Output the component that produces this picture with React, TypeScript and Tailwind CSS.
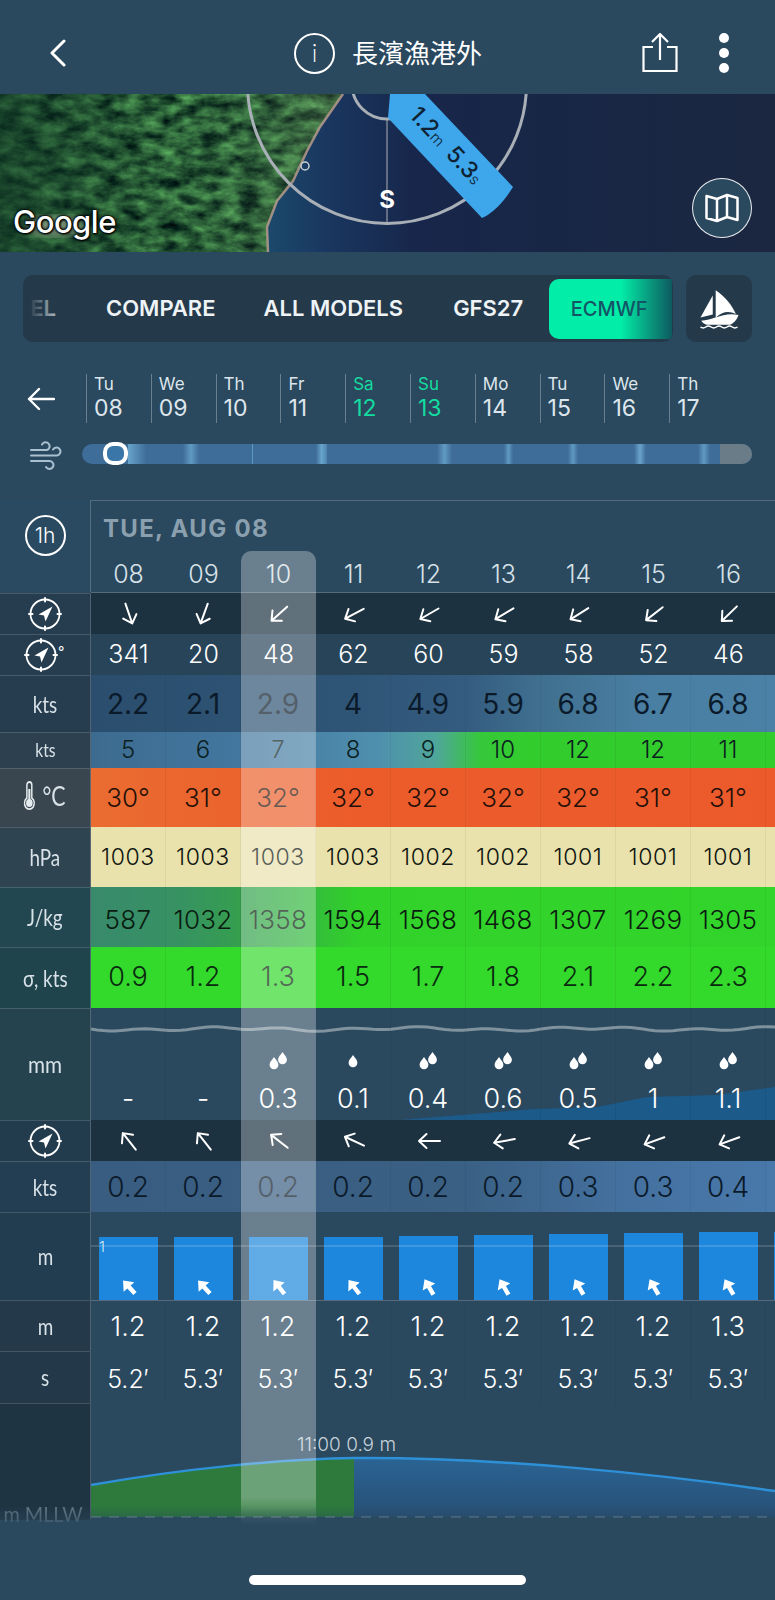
import React from "react";

const hours = ["08", "09", "10", "11", "12", "13", "14", "15", "16", ""];

function Compass() {
  return (
    <svg width="34" height="34" viewBox="0 0 34 34" className="block">
      <circle cx="17" cy="17" r="14.5" fill="none" stroke="#fff" strokeWidth="1.8" />
      <path d="M17 1v3.500M17 29.500V33M1 17h3.500M29.500 17H33" stroke="#fff" strokeWidth="2" strokeLinecap="round" />
      <path d="M24.500 9.500 10.500 17.500 16 18.500 17.500 24.500Z" fill="#fff" />
    </svg>
  );
}

function Arrow({ a }: { a: number }) {
  return (
    <svg width="26" height="26" viewBox="0 0 26 26" style={{ transform: `rotate(${a}deg)` }} className="block">
      <path d="M13 24V3M6 10.5 13 3l7 7.5" fill="none" stroke="#fff" strokeWidth="2" strokeLinecap="round" strokeLinejoin="round" />
    </svg>
  );
}

function FatArrow({ a }: { a: number }) {
  return (
    <svg width="20" height="20" viewBox="0 0 18 18" style={{ transform: `rotate(${a}deg)` }} className="block">
      <path d="M9 1 15.5 9H11v8H7V9H2.5Z" fill="#fff" />
    </svg>
  );
}

function Drops({ n }: { n: number }) {
  if (n === 0) return <div className="h-[22px]" />;
  const d = (x: number, y: number) => `M${x} ${y}c2.600 3.600 4.400 5.400 4.400 7.800a4.400 4.400 0 0 1-8.800 0c0-2.400 1.800-4.200 4.400-7.800Z`;
  return (
    <svg width="24" height="22" viewBox="0 0 24 22" className="block">
      {n === 1 ? (
        <path d={d(12, 4)} fill="#fff" />
      ) : (
        <>
          <path d={d(8, 6)} fill="#fff" />
          <path d={d(16.5, 1)} fill="#fff" />
        </>
      )}
    </svg>
  );
}

function Cell({ children }: { children?: React.ReactNode }) {
  return <div className="w-[75px] shrink-0 h-full flex items-center justify-center border-r border-black/5">{children}</div>;
}

function Label({ bg, children, small }: { bg: string; children: React.ReactNode; small?: boolean }) {
  return (
    <div className={`w-[91px] shrink-0 h-full flex items-center justify-center border-r border-t border-r-white/20 border-t-white/15 text-[#d8e2e8] [font-family:Lato,sans-serif] ${small ? "text-[19px]" : "text-[23px]"} ${bg}`}>
      <span className="inline-block scale-x-[0.82]">{children}</span>
    </div>
  );
}

type NumRow = {
  h: string;
  lab: string;
  label: React.ReactNode;
  small?: boolean;
  bg: string;
  size: string;
  color: string;
  vals: string[];
};

function ValueRow({ r }: { r: NumRow }) {
  return (
    <div className={`flex ${r.h}`}>
      <Label bg={r.lab} small={r.small}>{r.label}</Label>
      <div className={`flex h-full ${r.bg} ${r.size} ${r.color}`}>
        {[...r.vals, ""].map((v, i) => (
          <Cell key={i}>{v}</Cell>
        ))}
      </div>
    </div>
  );
}

function ArrowRow({ h, lab, angles }: { h: string; lab: string; angles: number[] }) {
  return (
    <div className={`flex ${h}`}>
      <div className={`w-[91px] shrink-0 h-full flex items-center justify-center border-r border-t border-r-white/20 border-t-white/15 ${lab}`}>
        <Compass />
      </div>
      <div className="flex h-full bg-[#1c3241]">
        {angles.map((a, i) => (
          <div key={i} className="w-[75px] shrink-0 h-full flex items-center justify-center">
            <Arrow a={a} />
          </div>
        ))}
        <div className="w-[75px] shrink-0" />
      </div>
    </div>
  );
}

const wave = (() => {
  let top = "M0 21";
  for (let x = 0; x <= 685; x += 6) {
    const y = 21 + Math.sin(x / 11) * 1.3 + Math.sin(x / 29) * 1.1;
    top += ` L${x} ${y.toFixed(1)}`;
  }
  return top;
})();

const barTops = ["mt-[25px]", "mt-[25px]", "mt-[25px]", "mt-[25px]", "mt-[24px]", "mt-[23px]", "mt-[22px]", "mt-[21px]", "mt-[20px]", "mt-[20px]"];

export default function App() {
  return (
    <div className="relative w-[775px] h-[1600px] overflow-hidden bg-[#2a485e] text-white [font-family:Inter,sans-serif]">
      {/* header */}
      <div className="flex items-center h-[94px] pt-[12px]">
        <svg width="20" height="28" viewBox="0 0 20 28" className="ml-[48px]">
          <path d="M16 2 4 14l12 12" fill="none" stroke="#fff" strokeWidth="3" strokeLinecap="round" strokeLinejoin="round" />
        </svg>
        <div className="ml-[226px] w-[41px] h-[41px] rounded-full border-2 border-white flex items-center justify-center text-[25px] font-light [font-family:Lato,sans-serif]">i</div>
        <div className="ml-[17px] -mt-[3px] text-[26px] leading-none [font-family:'Noto_Sans_CJK_TC',sans-serif]">長濱漁港外</div>
        <svg width="36" height="40" viewBox="0 0 36 40" className="ml-[160px]">
          <path d="M11 14H1.500v24h33V14H25M18 27V2M10 9l8-8 8 8" fill="none" stroke="#fff" strokeWidth="2.2" />
        </svg>
        <div className="ml-[41px] flex flex-col gap-[5px]">
          <div className="w-[10px] h-[10px] rounded-full bg-white" />
          <div className="w-[10px] h-[10px] rounded-full bg-white" />
          <div className="w-[10px] h-[10px] rounded-full bg-white" />
        </div>
      </div>

      {/* map */}
      <div className="relative h-[158px] overflow-hidden">
        <svg width="775" height="158" viewBox="0 94 775 158" className="block">
          <defs>
            <linearGradient id="sea" x1="0" x2="1" y1="0" y2="0">
              <stop offset="0.34" stopColor="#1a4a6c" />
              <stop offset="0.42" stopColor="#1a3760" />
              <stop offset="0.54" stopColor="#17264a" />
              <stop offset="1" stopColor="#1b2740" />
            </linearGradient>
            <linearGradient id="shade" x1="0" x2="1" y1="0" y2="0">
              <stop offset="0" stopColor="#0f3524" stopOpacity="0.65" />
              <stop offset="0.5" stopColor="#0f3524" stopOpacity="0.05" />
              <stop offset="1" stopColor="#8aa070" stopOpacity="0.28" />
            </linearGradient>
            <filter id="land" x="0" y="0" width="100%" height="100%" colorInterpolationFilters="sRGB">
              <feTurbulence type="fractalNoise" baseFrequency="0.05 0.09" numOctaves="5" seed="11" />
              <feColorMatrix values="0.550 0 0 0 -0.110  0.900 0 0 0 -0.080  0.450 0 0 0 -0.010  0 0 0 0 1" />
              <feComposite in2="SourceGraphic" operator="in" />
            </filter>
            <filter id="soft"><feGaussianBlur stdDeviation="5" /></filter>
          </defs>
          <rect x="0" y="94" width="775" height="158" fill="url(#sea)" />
          <path d="M0 94H343L320 127 307 151 293 181 277 201 267 227 268 252H0Z" fill="#2d5f35" filter="url(#land)" />
          <path d="M0 94H343L320 127 307 151 293 181 277 201 267 227 268 252H0Z" fill="url(#shade)" />
          <ellipse cx="55" cy="226" rx="30" ry="10" fill="#b7c2a8" opacity="0.6" filter="url(#soft)" />
          <path d="M343 94 320 127 307 151 293 181 277 201 267 227 268 252" fill="none" stroke="#b59a8c" strokeWidth="2.500" opacity="0.85" />
          <circle cx="305" cy="166" r="4" fill="none" stroke="#c9d0d4" strokeWidth="1.500" />
          <g fill="none" stroke="#a9afb6">
            <circle cx="387" cy="84" r="139.500" strokeWidth="3" />
            <circle cx="387" cy="84" r="35" strokeWidth="3" />
            <path d="M387 119V223" strokeWidth="1" />
          </g>
          <path d="M390 94H425L513 187C505 200 495 212 482 218L388 118Z" fill="#3ea6ea" />
          <text x="387" y="208" textAnchor="middle" fontFamily="Inter" fontWeight="700" fontSize="24" fill="#fff">S</text>
          <g transform="translate(446 146) rotate(47)" fontFamily="Inter" fill="#0e2233" textAnchor="middle">
            <text x="0" y="7" fontSize="23" fontWeight="500">1.2<tspan fontSize="15" fontWeight="300">m</tspan><tspan dx="10">5.3</tspan><tspan fontSize="15" fontWeight="300">s</tspan></text>
          </g>
        </svg>
        <div className="absolute left-[13px] bottom-[15px] text-[31px] font-medium leading-none tracking-[-0.5px] [font-family:Inter,sans-serif] [text-shadow:0_0_3px_#000,0_0_3px_#000,0_0_2px_#000,1px_1px_2px_#000]">Google</div>
        <div className="absolute left-[692px] top-[84px] w-[60px] h-[60px] rounded-full bg-[#2a485e] border-[1.5px] border-white/90 flex items-center justify-center">
          <svg width="34" height="30" viewBox="0 0 34 30">
            <path d="M1.500 3 12 6 22 2 32.500 5V27L22 24 12 28 1.500 25ZM12 6V28M22 2V24" fill="none" stroke="#fff" strokeWidth="2.500" strokeLinejoin="round" />
          </svg>
        </div>
      </div>

      {/* model selector */}
      <div className="flex mt-[23px] ml-[23px] gap-[13px] h-[67px]">
        <div className="relative w-[650px] h-full rounded-[10px] bg-[#243a4b] overflow-hidden flex items-center font-semibold text-[22px] text-[#eef3f6]">
          <div className="ml-[-30px] w-[63px] shrink-0 text-right">DEL</div>
          <div className="ml-[50px] shrink-0">COMPARE</div>
          <div className="ml-[48px] shrink-0">ALL MODELS</div>
          <div className="ml-[50px] shrink-0">GFS27</div>
          <div className="ml-[26px] w-[123px] h-[60px] shrink-0 rounded-l-[10px] flex items-center justify-center pr-[3px] text-[20px] font-medium text-[#135566] bg-[linear-gradient(to_right,#02eea8_58%,#0e5a5f_100%)]">ECMWF</div>
          <div className="absolute left-0 top-0 h-full w-[38px] bg-[linear-gradient(to_right,#243a4b_15%,rgba(36,58,75,0.2)_100%)]" />
        </div>
        <div className="w-[66px] h-full rounded-[10px] bg-[#243a4b] flex items-center justify-center">
          <svg width="45" height="43" viewBox="50 50 135 130">
            <path d="M97 76 60 142 97 133Z" fill="#fff" />
            <path d="M106 60C135 80 155 105 167 132 145 120 125 125 106 142Z" fill="#fff" />
            <path d="M62 152C100 150 130 125 175 135 170 150 160 160 150 164H78C72 162 66 158 62 152Z" fill="#fff" />
            <path d="M60 171q8 6 16 0t16 0 16 0 16 0 16 0 16 0 16 0" fill="none" stroke="#fff" strokeWidth="4.500" />
          </svg>
        </div>
      </div>

      {/* dates */}
      <div className="flex items-center mt-[32px] h-[49px]">
        <svg width="28" height="24" viewBox="0 0 28 24" className="ml-[27px]">
          <path d="M27 12H2M12 2 2 12l10 10" fill="none" stroke="#fff" strokeWidth="2.400" strokeLinecap="round" strokeLinejoin="round" />
        </svg>
        <div className="ml-[31px] flex h-full">
          {[
            ["Tu", "08", 0],
            ["We", "09", 0],
            ["Th", "10", 0],
            ["Fr", "11", 0],
            ["Sa", "12", 1],
            ["Su", "13", 1],
            ["Mo", "14", 0],
            ["Tu", "15", 0],
            ["We", "16", 0],
            ["Th", "17", 0],
          ].map(([d, n, w], i) => (
            <div key={i} className={`w-[64.800px] h-full border-l border-white/30 pl-[7px] flex flex-col justify-between ${w ? "text-[#14dca0]" : "text-[#dde6ec]"}`}>
              <div className="text-[17px] leading-[20px]">{d}</div>
              <div className="text-[23px] leading-[26px] mb-[2px]">{n}</div>
            </div>
          ))}
        </div>
      </div>

      {/* wind slider */}
      <div className="flex items-center mt-[21px] h-[20px]">
        <svg width="32" height="34" viewBox="0 0 32 34" className="ml-[30px] shrink-0">
          <path d="M1 13H17a4 4 0 1 0-5-5.500M1 18.500H27a4 4 0 1 0-4-6M1 24H20a4 4 0 1 1-4 6" fill="none" stroke="#a8c0d0" strokeWidth="2" strokeLinecap="round" />
        </svg>
        <div className="relative ml-[20px] w-[670px] h-[20px]">
          <div className="w-full h-full rounded-full overflow-hidden flex bg-[#3f6d99]">
            <div className="ml-[46px] w-[18px] h-full bg-[linear-gradient(to_right,#68a4cc,#3f6d99)]" />
            <div className="ml-[37px] w-[16px] h-full bg-[linear-gradient(to_right,#3f6d99,#5f9ac2,#3f6d99)]" />
            <div className="ml-[53px] w-[1px] h-full bg-[#5f9ac2]" />
            <div className="ml-[63px] w-[11px] h-full bg-[linear-gradient(to_right,#3f6d99,#68a4cc,#4f84ae)]" />
            <div className="ml-[110px] w-[15px] h-full bg-[linear-gradient(to_right,#3f6d99,#5f9ac2,#3f6d99)]" />
            <div className="ml-[52px] w-[9px] h-full bg-[linear-gradient(to_right,#3f6d99,#5f9ac2,#3f6d99)]" />
            <div className="ml-[55px] w-[10px] h-full bg-[linear-gradient(to_right,#3f6d99,#5f9ac2,#3f6d99)]" />
            <div className="ml-[56px] w-[12px] h-full bg-[linear-gradient(to_right,#3f6d99,#68a4cc,#3f6d99)]" />
            <div className="ml-[52px] w-[12px] h-full bg-[linear-gradient(to_right,#3f6d99,#5f9ac2,#3f6d99)]" />
            <div className="ml-auto w-[32px] h-full bg-[#6b7c89]" />
          </div>
          <div className="absolute left-[21px] top-[-2px] w-[25px] h-[23px] rounded-[10px] border-[4px] border-white bg-[#3a76a8]" />
        </div>
      </div>

      {/* table */}
      <div className="relative mt-[36px]">
        <div className="flex h-[92px]">
          <div className="w-[91px] shrink-0 h-full border-r border-white/20 flex items-start justify-center pt-[15px] bg-[#2a4a61]">
            <div className="w-[41px] h-[41px] rounded-full border-2 border-white flex items-center justify-center text-[21px] font-light">1h</div>
          </div>
          <div className="flex-1 border-t border-white/20 pt-[13px]">
            <div className="pl-[12px] text-[24px] leading-[30px] font-bold tracking-[1.3px] text-[#8ba0ae]">TUE, AUG 08</div>
            <div className="flex mt-[15px]">
              {hours.map((h, i) => (
                <div key={i} className="w-[75px] shrink-0 text-center text-[25px] leading-[30px] font-light text-[#d6e1e8]">{h}</div>
              ))}
            </div>
          </div>
        </div>
        <div className="ml-[91px] h-0 border-t border-white/20" />

        <ArrowRow h="h-[41px]" lab="bg-[#263d4f]" angles={[161, 200, 228, 242, 240, 239, 238, 232, 226]} />
        <div className="flex h-[41px]">
          <div className="relative w-[91px] shrink-0 h-full flex items-center justify-center border-r border-t border-r-white/20 border-t-white/15 bg-[#263d4f] pr-[8px]">
            <Compass />
            <span className="absolute left-[58px] top-[6px] text-[14px]">°</span>
          </div>
          <div className="flex h-full bg-[#274459] text-[25px] font-light text-white">
            {["341", "20", "48", "62", "60", "59", "58", "52", "46", ""].map((v, i) => (
              <div key={i} className="w-[75px] shrink-0 flex items-center justify-center">{v}</div>
            ))}
          </div>
        </div>
        <ValueRow r={{ h: "h-[57px]", lab: "bg-[#263d4f]", label: "kts", bg: "bg-[linear-gradient(to_right,#2b4e6e_0%,#2f5576_35%,#345c80_50%,#40708f_60%,#4a7fa4_75%,#4d82a8_100%)]", size: "text-[28px] font-normal", color: "text-[#0b1a2a]", vals: ["2.2", "2.1", "2.9", "4", "4.9", "5.9", "6.8", "6.7", "6.8"] }} />
        <ValueRow r={{ h: "h-[36px]", lab: "bg-[#2c404f]", label: "kts", small: true, bg: "bg-[linear-gradient(to_right,#3d6b90_0%,#4478a0_22%,#4f8fae_38%,#4fa69a_46%,#36c83a_52%,#33cc2d_58%,#33cc2d_100%)]", size: "text-[24px] font-light", color: "text-[#0b2020]", vals: ["5", "6", "7", "8", "9", "10", "12", "12", "11"] }} />
        <ValueRow r={{ h: "h-[59px]", lab: "bg-[#39454f]", label: <span className="inline-flex items-center gap-[9px]"><svg width="14" height="30" viewBox="0 0 14 30"><path d="M4 4a3 3 0 0 1 6 0v13a6 6 0 1 1-6 0Z" fill="none" stroke="#e5ecef" strokeWidth="1.800" /><circle cx="7" cy="22" r="4" fill="#e5ecef" /><path d="M7 8v12" stroke="#e5ecef" strokeWidth="2.500" /></svg><span className="text-[26px]">°C</span></span>, bg: "bg-[linear-gradient(to_right,#ea6c31_0%,#ec5c2b_35%,#ec5a2b_100%)]", size: "text-[26px] font-light", color: "text-[#241008]", vals: ["30°", "31°", "32°", "32°", "32°", "32°", "32°", "31°", "31°"] }} />
        <ValueRow r={{ h: "h-[60px]", lab: "bg-[#2f4451]", label: "hPa", bg: "bg-[#e9e2ad]", size: "text-[23px] font-light tracking-[0.6px]", color: "text-[#101510]", vals: ["1003", "1003", "1003", "1003", "1002", "1002", "1001", "1001", "1001"] }} />
        <ValueRow r={{ h: "h-[60px]", lab: "bg-[#234750]", label: "J/kg", bg: "bg-[linear-gradient(to_right,#388a6c_0%,#379262_12%,#359f4e_20%,#33b83f_28%,#32d22a_36%,#32d52b_100%)] [&>div]:pt-[5px]", size: "text-[26px] font-light tracking-[0.3px]", color: "text-[#0a1c10]", vals: ["587", "1032", "1358", "1594", "1568", "1468", "1307", "1269", "1305"] }} />
        <ValueRow r={{ h: "h-[61px]", lab: "bg-[#1f444c]", label: "σ, kts", bg: "bg-[#33d92b]", size: "text-[27px] font-light", color: "text-[#0a2a10]", vals: ["0.9", "1.2", "1.3", "1.5", "1.7", "1.8", "2.1", "2.2", "2.3"] }} />

        {/* rain */}
        <div className="flex h-[112px]">
          <div className="w-[91px] shrink-0 h-full flex justify-center pt-[38px] border-r border-t border-r-white/20 border-t-white/15 bg-[#25424f] text-[23px] text-[#d8e2e8] [font-family:Lato,sans-serif]">
            <span className="inline-block h-[30px] scale-x-[0.9]">mm</span>
          </div>
          <div className="relative flex h-full bg-[#2a485e]">
            <svg width="684" height="112" viewBox="0 0 684 112" className="absolute left-0 top-0">
              <path d={wave} fill="none" stroke="#7f929e" strokeWidth="3" />
              <path d="M309 112 442 101 506 99 556 89 626 87 684 79V112Z" fill="#1c5a8a" />
            </svg>
            {[
              ["-", 0],
              ["-", 0],
              ["0.3", 2],
              ["0.1", 1],
              ["0.4", 2],
              ["0.6", 2],
              ["0.5", 2],
              ["1", 2],
              ["1.1", 2],
              ["", 0],
            ].map(([v, n], i) => (
              <div key={i} className="relative w-[75px] shrink-0 h-full flex flex-col items-center border-r border-black/5">
                <div className="mt-[43px]"><Drops n={n as number} /></div>
                <div className="mt-[8px] text-[27px] leading-[36px] font-light text-white">{v}</div>
              </div>
            ))}
          </div>
        </div>

        <ArrowRow h="h-[41px]" lab="bg-[#223c4e]" angles={[-38, -38, -52, -65, -90, -100, -105, -110, -110]} />
        <ValueRow r={{ h: "h-[51px]", lab: "bg-[#233e52]", label: "kts", bg: "bg-[linear-gradient(to_right,#395d80_0%,#3a6084_50%,#44709e_70%,#4a7cb0_100%)]", size: "text-[28px] font-light", color: "text-[#0b1a2a]", vals: ["0.2", "0.2", "0.2", "0.2", "0.2", "0.2", "0.3", "0.3", "0.4"] }} />

        {/* waves chart */}
        <div className="flex h-[88px]">
          <Label bg="bg-[#223c50]">m</Label>
          <div className="relative flex h-full bg-[#2a485e]">
            {barTops.map((t, i) => (
              <div key={i} className="w-[75px] shrink-0 h-full px-[8px] flex flex-col">
                <div className={`${t} flex-1 bg-[#1c87dc] flex items-end justify-center pb-[3px]`}>
                  <FatArrow a={i < 2 ? -42 : i < 4 ? -38 : -30} />
                </div>
              </div>
            ))}
            <div className="absolute left-0 right-0 top-[33px] h-[2px] bg-white/15" />
            <div className="absolute left-[8px] top-[24px] text-[15px] font-light text-[#d8e6f0]">1</div>
          </div>
        </div>

        <ValueRow r={{ h: "h-[51px]", lab: "bg-[#243a4b]", label: "m", bg: "bg-[#2a485e] border-t border-white/20 [&>div]:pt-[3px]", size: "text-[27px] font-light", color: "text-white", vals: ["1.2", "1.2", "1.2", "1.2", "1.2", "1.2", "1.2", "1.2", "1.3"] }} />
        <ValueRow r={{ h: "h-[52px]", lab: "bg-[#233848]", label: "s", bg: "bg-[#2a485e] [&>div]:pt-[5px]", size: "text-[25px] font-light", color: "text-white", vals: ["5.2′", "5.3′", "5.3′", "5.3′", "5.3′", "5.3′", "5.3′", "5.3′", "5.3′"] }} />

        {/* tide */}
        <div className="flex h-[117px]">
          <div className="w-[91px] shrink-0 h-full flex items-end justify-center border-r border-t border-r-white/20 border-t-white/15 bg-[#1f3443] text-[22px] text-[#5e7482] [font-family:Lato,sans-serif]">
            <span className="inline-block -ml-[4px] mb-[-10px] whitespace-nowrap scale-x-[0.9]">m MLLW</span>
          </div>
          <svg width="684" height="130" viewBox="0 0 684 130" className="shrink-0">
            <defs>
              <linearGradient id="tb" x1="0" x2="0" y1="0" y2="1">
                <stop offset="0" stopColor="#2a6494" />
                <stop offset="1" stopColor="#274f74" />
              </linearGradient>
            </defs>
            <path d="M0 82C90 66 190 56 263 55C400 54 560 70 684 88V114H0Z" fill="url(#tb)" />
            <path d="M0 82C90 66 190 56 263 55V114H0Z" fill="#2d7a3c" />
            <path d="M0 82C90 66 190 56 263 55C400 54 560 70 684 88" fill="none" stroke="#2e90d6" strokeWidth="2.500" />
            <path d="M0 114H684" stroke="#8aa0ae" strokeWidth="1.500" strokeDasharray="10 8" opacity="0.6" />
            <text x="206" y="48" fontFamily="Inter" fontWeight="300" fontSize="19" fill="#c5d1d9">11:00 0.9 m</text>
          </svg>
        </div>

        {/* selected hour */}
        <div className="absolute left-[241px] top-[51px] w-[75px] h-[975px] rounded-t-[10px] bg-[linear-gradient(to_bottom,rgba(255,255,255,0.3)_97%,rgba(255,255,255,0)_100%)]" />
        {/* bottom fade */}
        <div className="absolute left-0 top-[1006px] w-full h-[34px] bg-[linear-gradient(to_bottom,rgba(42,72,94,0)_0%,#2a485e_90%)]" />
      </div>

      {/* home bar */}
      <div className="absolute left-[249px] top-[1575px] w-[277px] h-[10px] rounded-full bg-white" />
    </div>
  );
}
